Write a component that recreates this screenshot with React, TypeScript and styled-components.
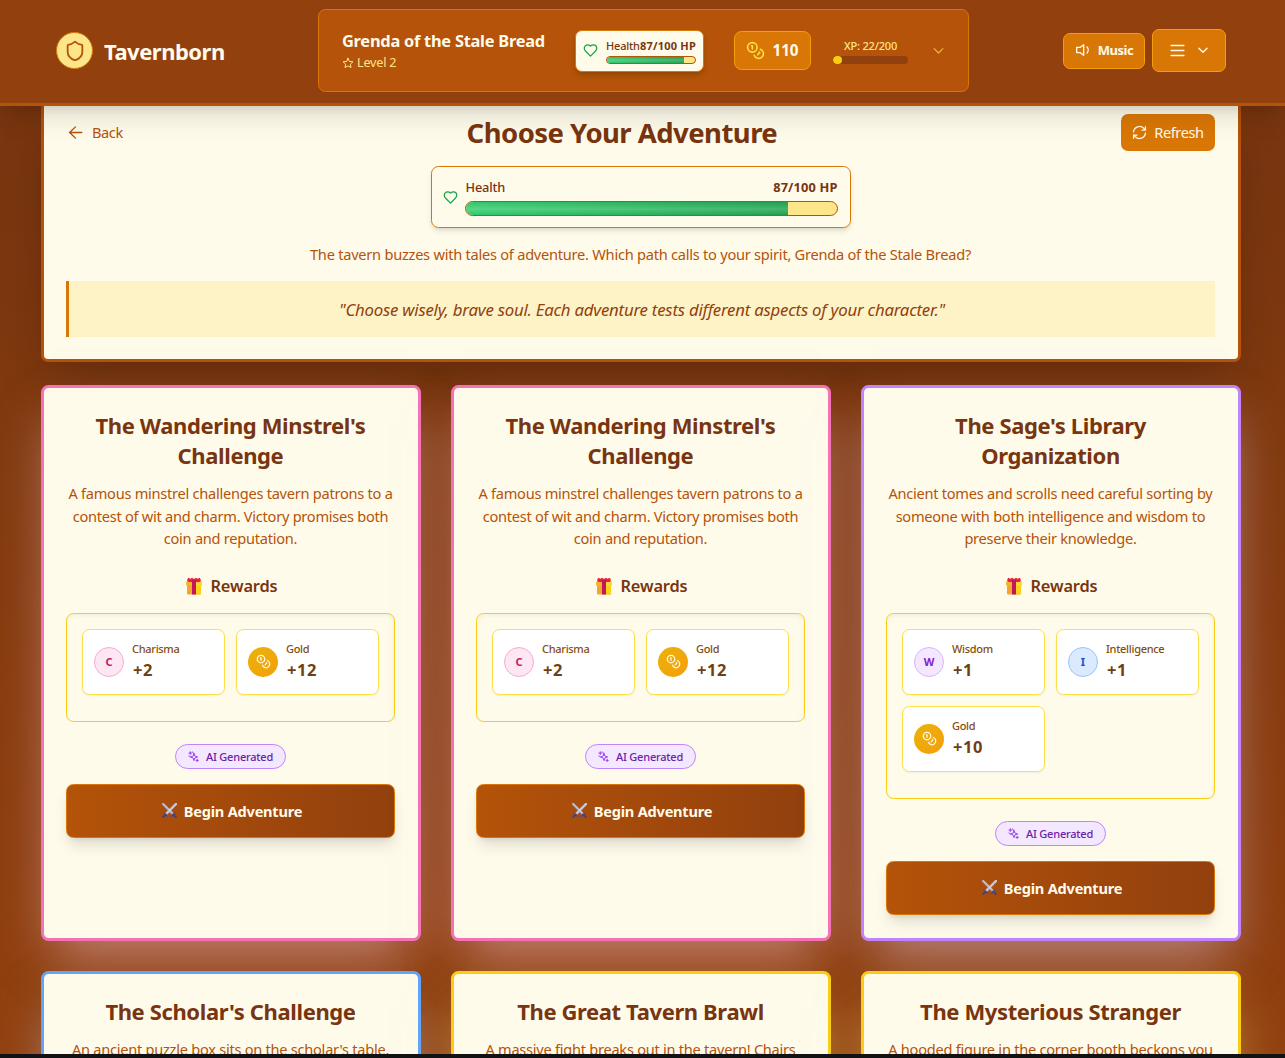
import React from "react";
import styled, { createGlobalStyle } from "styled-components";

const GlobalStyle = createGlobalStyle`
  * {
    box-sizing: border-box;
  }
  html {
    overflow: hidden;
  }
  body {
    margin: 0;
    background-color: #111214;
    font-family: "Noto Sans", "Open Sans", sans-serif;
    font-size: 15px;
  }
  h1, h2, h3, h4, p {
    margin: 0;
  }
  button {
    font-family: inherit;
    cursor: pointer;
  }
`;

interface ISvg {
  size: number;
  color?: string;
  weight?: number;
}

interface ITone {
  tone: string;
  glow: string;
}

interface IBadge {
  bg: string;
  line: string;
  color: string;
}

const Page = styled.div`
  height: 1054px;
  overflow: hidden;
  background: linear-gradient(to bottom, #78350f 0, #78350f 100px, #92400e 100%);
`;

const Header = styled.header`
  position: relative;
  z-index: 2;
  height: 106px;
  padding: 9px 59px 0 56px;
  display: flex;
  align-items: flex-start;
  justify-content: space-between;
  background-color: #92400e;
  border-bottom: 3px solid #b45309;
  box-shadow: 0 18px 24px -5px rgba(0, 0, 0, 0.1), 0 8px 10px -6px rgba(0, 0, 0, 0.12);
`;

const Brand = styled.div`
  width: 168px;
  height: 83px;
  display: flex;
  align-items: center;
  gap: 11px;
`;

const BrandMark = styled.div`
  width: 37px;
  height: 37px;
  flex-shrink: 0;
  display: flex;
  align-items: center;
  justify-content: center;
  border: 1px solid #d97706;
  border-radius: 50%;
  background-color: #fde68a;
`;

const BrandName = styled.span`
  color: #fffbeb;
  font-size: 22px;
  font-weight: 700;
  letter-spacing: -0.5px;
  white-space: nowrap;
`;

const Character = styled.div`
  width: 651px;
  height: 83px;
  padding: 0 22px 0 23px;
  display: flex;
  align-items: center;
  border: 1px solid #d97706;
  border-radius: 7.5px;
  background-color: #b45309;
`;

const CharacterInfo = styled.div`
  width: 233px;
  padding-top: 3px;
`;

const CharacterName = styled.h3`
  color: #fffbeb;
  font-size: 16.4px;
  line-height: 22px;
  font-weight: 700;
  letter-spacing: -0.25px;
  white-space: nowrap;
`;

const CharacterLevel = styled.div`
  display: flex;
  align-items: center;
  gap: 3px;
  color: #fde68a;
  font-size: 12.6px;
  line-height: 22px;
  letter-spacing: -0.2px;
`;

const MiniHealth = styled.div`
  width: 129px;
  height: 42px;
  padding: 0 7px;
  display: flex;
  align-items: center;
  gap: 8px;
  border: 1px solid #d97706;
  border-radius: 7px;
  background-color: #fffbeb;
  box-shadow: 0 4px 6px -1px rgba(0, 0, 0, 0.15), 0 2px 4px -2px rgba(0, 0, 0, 0.15);
`;

const MiniBody = styled.div`
  width: 90px;
`;

const MiniText = styled.div`
  display: flex;
  justify-content: space-between;
  color: #78350f;
  font-size: 11px;
  line-height: 15px;
  font-weight: 500;
  letter-spacing: -0.2px;
  white-space: nowrap;

  b {
    letter-spacing: 0.2px;
  }
`;

const Track = styled.div<{ thick: number }>`
  height: ${(props) => props.thick}px;
  margin-top: 3px;
  overflow: hidden;
  border: 1px solid #b45309;
  border-radius: 8px;
  background-color: #fde68a;
`;

const Fill = styled.div`
  height: 100%;
  background: linear-gradient(to bottom, rgba(0, 0, 0, 0.04), rgba(255, 255, 255, 0.16) 55%, rgba(0, 0, 0, 0.04)),
    linear-gradient(to right, #34ce70, #22a652);
`;

const GoldBox = styled.div`
  width: 77px;
  height: 39px;
  margin: 0 22px 0 30px;
  padding-bottom: 1px;
  display: flex;
  align-items: center;
  justify-content: center;
  gap: 7px;
  border: 1px solid #f59e0b;
  border-radius: 7.5px;
  background-color: #d97706;
  color: #fffbeb;
  font-size: 15.2px;
  font-weight: 700;
`;

const Xp = styled.div`
  width: 75px;
  margin-right: 23px;
  color: #fde68a;
  font-size: 11px;
  line-height: 15px;
  font-weight: 500;
  letter-spacing: -0.2px;
  text-align: center;
`;

const XpTrack = styled.div`
  height: 8px;
  margin-top: 3px;
  overflow: hidden;
  border-radius: 4px;
  background-color: #92400e;
`;

const XpFill = styled.div`
  height: 100%;
  border-radius: 4px;
  background-color: #facc15;
`;

const Tools = styled.div`
  height: 83px;
  display: flex;
  align-items: center;
  gap: 7px;
`;

const MusicBtn = styled.button`
  width: 82px;
  height: 36px;
  padding: 0 0 1px;
  display: flex;
  align-items: center;
  justify-content: center;
  gap: 7px;
  border: 1px solid #f59e0b;
  border-radius: 7px;
  background-color: #d97706;
  color: #fffbeb;
  font-size: 13px;
  font-weight: 700;
  letter-spacing: -0.5px;
`;

const MenuBtn = styled(MusicBtn)`
  width: 74px;
  height: 43px;
  gap: 10px;
`;

const Content = styled.main`
  margin: 0 44px 0 41px;
`;

const Panel = styled.section`
  height: 256px;
  padding: 8px 23px 0 22px;
  border: 3px solid #b45309;
  border-top: none;
  border-radius: 0 0 7px 7px;
  background-color: #fffbeb;
  box-shadow: 0 25px 50px -12px rgba(0, 0, 0, 0.25);
`;

const TitleRow = styled.div`
  height: 37px;
  display: flex;
  align-items: center;
  justify-content: space-between;
`;

const BackBtn = styled.button`
  padding: 0 0 1px 2px;
  display: flex;
  align-items: center;
  gap: 9px;
  border: none;
  background: none;
  color: #b45309;
  font-size: 14.6px;
  letter-spacing: -0.4px;
`;

const PageTitle = styled.h1`
  color: #78350f;
  font-size: 27.5px;
  line-height: 34px;
  font-weight: 700;
  letter-spacing: -0.54px;
`;

const RefreshBtn = styled.button`
  width: 94px;
  height: 37px;
  padding: 0 0 1px;
  display: flex;
  align-items: center;
  justify-content: center;
  gap: 7px;
  border: none;
  border-radius: 7px;
  background-color: #d97706;
  color: #fffbeb;
  font-size: 14.6px;
  letter-spacing: -0.4px;
`;

const HealthBox = styled.div`
  width: 420px;
  height: 62px;
  margin: 15px auto 0;
  padding: 1px 12px 0 11px;
  display: flex;
  align-items: center;
  gap: 7px;
  border: 1px solid #d97706;
  border-radius: 7.5px;
  box-shadow: 0 4px 6px -1px rgba(0, 0, 0, 0.1), 0 2px 4px -2px rgba(0, 0, 0, 0.1);
`;

const HealthBody = styled.div`
  flex: 1;
`;

const HealthText = styled.div`
  margin-bottom: 6px;
  padding-left: 1px;
  display: flex;
  justify-content: space-between;
  color: #78350f;
  font-size: 12.8px;
  line-height: 15px;
  font-weight: 500;
  letter-spacing: -0.15px;

  b {
    letter-spacing: 0.15px;
  }

  & + ${Track} {
    margin-top: 0;
  }
`;

const Intro = styled.p`
  margin-top: 15px;
  color: #b45309;
  font-size: 14.6px;
  line-height: 23px;
  text-align: center;
  letter-spacing: -0.245px;
`;

const Quote = styled.p`
  height: 56px;
  margin-top: 15px;
  border-left: 3px solid #d97706;
  background-color: #fef3c7;
  color: #92400e;
  font-size: 16.8px;
  line-height: 57px;
  font-style: italic;
  text-align: center;
  letter-spacing: -0.22px;
`;

const Grid = styled.div`
  margin-top: 23px;
  display: grid;
  grid-template-columns: repeat(3, 1fr);
  grid-auto-rows: 556px;
  gap: 30px;
`;

const Card = styled.article<ITone>`
  padding: 22px 23px 0 22px;
  display: flex;
  flex-direction: column;
  align-items: center;
  border: 3px solid ${(props) => props.tone};
  border-radius: 7.5px;
  background-color: #fffbeb;
  box-shadow: 0 25px 50px -12px ${(props) => props.glow};
`;

const CardTitle = styled.h3`
  color: #78350f;
  font-size: 22px;
  line-height: 30px;
  font-weight: 700;
  text-align: center;
  letter-spacing: -0.38px;
  white-space: pre;
`;

const CardText = styled.p`
  margin-top: 12px;
  color: #b45309;
  font-size: 14.6px;
  line-height: 22.5px;
  text-align: center;
  letter-spacing: -0.26px;
  white-space: pre;
`;

const RewardsTitle = styled.h4`
  height: 26px;
  margin: 23px 0 14px;
  padding-left: 3px;
  display: flex;
  align-items: center;
  gap: 8px;
  color: #78350f;
  font-size: 16.4px;
  font-weight: 600;
  letter-spacing: -0.15px;
`;

const RewardsBox = styled.div`
  width: 100%;
  padding: 15px 15px 26px;
  display: grid;
  grid-template-columns: 1fr 1fr;
  gap: 11px;
  border: 1px solid #facc15;
  border-radius: 7.5px;
  box-shadow: inset 0 2px 4px rgba(0, 0, 0, 0.05);
`;

const Reward = styled.div`
  height: 66px;
  padding-left: 11px;
  display: flex;
  align-items: center;
  gap: 8px;
  border: 1px solid #fde047;
  border-radius: 7.5px;
  background-color: #ffffff;
  box-shadow: 0 1px 2px rgba(0, 0, 0, 0.05);
`;

const StatBadge = styled.div<IBadge>`
  width: 30px;
  height: 30px;
  display: flex;
  align-items: center;
  justify-content: center;
  border: 1px solid ${(props) => props.line};
  border-radius: 50%;
  background: ${(props) => props.bg};
  background-origin: border-box;
  color: ${(props) => props.color};
  font-size: 11px;
  font-weight: 700;
`;

const RewardName = styled.div`
  color: #854d0e;
  font-size: 11px;
  line-height: 15px;
  font-weight: 500;
  letter-spacing: -0.3px;
`;

const RewardValue = styled.div`
  padding: 1px 0 0 1px;
  color: #713f12;
  font-size: 16.5px;
  line-height: 26px;
  font-weight: 700;
  letter-spacing: 0.5px;
`;

const AiTag = styled.div`
  width: 111px;
  height: 25px;
  margin: 22px 0 15px;
  display: flex;
  flex-shrink: 0;
  align-items: center;
  justify-content: center;
  gap: 7px;
  border: 1px solid #c084fc;
  border-radius: 13px;
  background-color: #f3e8ff;
  color: #6b21a8;
  font-size: 11px;
  font-weight: 500;
  letter-spacing: -0.2px;
`;

const BeginBtn = styled.button`
  width: 100%;
  height: 54px;
  padding: 0 0 0 3px;
  display: flex;
  flex-shrink: 0;
  align-items: center;
  justify-content: center;
  gap: 7px;
  border: 1px solid #d97706;
  border-radius: 7.5px;
  background: linear-gradient(to right, #b45309, #92400e);
  color: #fffbeb;
  font-size: 14.6px;
  font-weight: 700;
  letter-spacing: -0.23px;
  box-shadow: 0 10px 15px -3px rgba(0, 0, 0, 0.12), 0 4px 6px -4px rgba(0, 0, 0, 0.12);
`;

const Stroke: React.FunctionComponent<ISvg & { children: React.ReactNode }> = ({ size, color = "currentColor", weight = 2, children }) => (
  <svg width={size} height={size} viewBox="0 0 24 24" fill="none" stroke={color} strokeWidth={weight} strokeLinecap="round" strokeLinejoin="round">
    {children}
  </svg>
);

const ShieldIcon = (props: ISvg) => (
  <Stroke {...props}>
    <path d="M20 13c0 5-3.500 7.500-7.660 8.950a1 1 0 0 1-.67-.01C7.500 20.500 4 18 4 13V6a1 1 0 0 1 1-1c2 0 4.500-1.200 6.240-2.720a1.170 1.170 0 0 1 1.520 0C14.510 3.810 17 5 19 5a1 1 0 0 1 1 1z" />
  </Stroke>
);

const StarIcon = (props: ISvg) => (
  <Stroke {...props}>
    <path d="M12 2.500l2.900 6.300 6.900.8-5.100 4.700 1.400 6.800-6.100-3.400-6.100 3.400 1.400-6.800-5.100-4.700 6.900-.8z" />
  </Stroke>
);

const HeartIcon = (props: ISvg) => (
  <Stroke {...props}>
    <path d="M19 14c1.490-1.460 3-3.210 3-5.500A5.500 5.500 0 0 0 16.500 3c-1.760 0-3 .5-4.500 2-1.500-1.500-2.740-2-4.500-2A5.500 5.500 0 0 0 2 8.500c0 2.300 1.500 4.050 3 5.500l7 7Z" />
  </Stroke>
);

const CoinsIcon = (props: ISvg) => (
  <Stroke {...props}>
    <circle cx="8" cy="8" r="6" />
    <path d="M18.090 10.370A6 6 0 1 1 10.340 18" />
    <path d="M7 6h1v4" />
    <path d="m16.710 13.880.7.710-2.820 2.820" />
  </Stroke>
);

const ChevronIcon = (props: ISvg) => (
  <Stroke {...props}>
    <path d="m5 9 7 7 7-7" />
  </Stroke>
);

const VolumeIcon = (props: ISvg) => (
  <Stroke {...props}>
    <path d="M13 4 8 8H2.500v8H8l5 4z" />
    <path d="M18 7.500a6.500 6.500 0 0 1 0 9" />
  </Stroke>
);

const MenuIcon = (props: ISvg) => (
  <Stroke {...props}>
    <path d="M3 5h18M3 12h18M3 19h18" />
  </Stroke>
);

const BackIcon = (props: ISvg) => (
  <Stroke {...props}>
    <path d="M22 12H2.500M12 3l-9.500 9 9.500 9" />
  </Stroke>
);

const RefreshIcon = (props: ISvg) => (
  <Stroke {...props}>
    <path d="M2.500 11A9.500 9.500 0 0 1 19 5.500l2.500 2.500M21.500 2.500V8H16M21.500 13A9.500 9.500 0 0 1 5 18.500L2.500 16M2.500 21.500V16H8" />
  </Stroke>
);

const SparklesIcon = (props: ISvg) => (
  <Stroke {...props}>
    <path d="M13 5l2 6 6 2-6 2-2 6-2-6-6-2 6-2z" />
    <path d="M5 1.500v6M2 4.500h6M20 18v5M17.500 20.500h5M10 2l1 2M2 11l2 1" />
  </Stroke>
);

const GiftIcon = () => (
  <svg width="16" height="18" viewBox="0 0 16 18">
    <rect x="1" y="7" width="14" height="10.500" rx="1" fill="#f3a62f" />
    <rect x="10" y="7" width="5" height="10.500" rx="1" fill="#fcd116" />
    <rect x="0" y="4.500" width="16" height="4" rx="0.800" fill="#f7b32e" />
    <rect x="10" y="4.500" width="6" height="4" rx="0.800" fill="#fdd835" />
    <path d="M1 4 2 .8l2.500 1L6 .8l2 1.200L10 .8l1.500 1 2.500-1L15 4l-1.500 1h-11z" fill="#e5243b" />
    <rect x="6" y="3" width="4" height="14.500" fill="#c2185b" />
  </svg>
);

const SwordsIcon = () => (
  <svg width="15" height="15" viewBox="0 0 16 16" fill="none" strokeLinecap="round">
    <path d="M1 1 11.500 11.500" stroke="#a9a3b8" strokeWidth="2.600" />
    <path d="M15 1 4.500 11.500" stroke="#c9c4d6" strokeWidth="2.600" />
    <path d="M1.500 1 11 10.500" stroke="#e9e5f0" strokeWidth="0.900" />
    <path d="M2 11 6 14M14 11 10 14" stroke="#5c4a86" strokeWidth="2" />
    <path d="M4 12.500 1.300 15M12 12.500l2.700 2.500" stroke="#494369" strokeWidth="2" />
  </svg>
);

const badges: Record<string, IBadge> = {
  Charisma: { bg: "#fce7f3", line: "#f9a8d4", color: "#be185d" },
  Wisdom: { bg: "#f3e8ff", line: "#d8b4fe", color: "#7e22ce" },
  Intelligence: { bg: "#dbeafe", line: "#93c5fd", color: "#1d4ed8" },
  Gold: { bg: "linear-gradient(135deg, #eab308, #f59e0b)", line: "transparent", color: "#fffbeb" },
};

interface IAdventure {
  title: string;
  text: string;
  tone: string;
  glow: string;
  rewards: [string, string][];
}

const minstrel: IAdventure = {
  title: "The Wandering Minstrel's\nChallenge",
  text: "A famous minstrel challenges tavern patrons to a\ncontest of wit and charm. Victory promises both\ncoin and reputation.",
  tone: "#f472b6",
  glow: "rgba(251, 207, 232, 0.5)",
  rewards: [["Charisma", "+2"], ["Gold", "+12"]],
};

const adventures: IAdventure[] = [
  minstrel,
  minstrel,
  {
    title: "The Sage's Library\nOrganization",
    text: "Ancient tomes and scrolls need careful sorting by\nsomeone with both intelligence and wisdom to\npreserve their knowledge.",
    tone: "#c084fc",
    glow: "rgba(233, 213, 255, 0.5)",
    rewards: [["Wisdom", "+1"], ["Intelligence", "+1"], ["Gold", "+10"]],
  },
  {
    title: "The Scholar's Challenge",
    text: "An ancient puzzle box sits on the scholar's table.",
    tone: "#60a5fa",
    glow: "rgba(191, 219, 254, 0.5)",
    rewards: [],
  },
  {
    title: "The Great Tavern Brawl",
    text: "A massive fight breaks out in the tavern! Chairs",
    tone: "#facc15",
    glow: "rgba(254, 240, 138, 0.5)",
    rewards: [],
  },
  {
    title: "The Mysterious Stranger",
    text: "A hooded figure in the corner booth beckons you",
    tone: "#facc15",
    glow: "rgba(254, 240, 138, 0.5)",
    rewards: [],
  },
];

const AdventureCard: React.FunctionComponent<IAdventure> = ({ title, text, tone, glow, rewards }) => (
  <Card tone={tone} glow={glow}>
    <CardTitle>{title}</CardTitle>
    <CardText>{text}</CardText>
    {rewards.length > 0 && (
      <>
        <RewardsTitle>
          <GiftIcon />
          Rewards
        </RewardsTitle>
        <RewardsBox>
          {rewards.map(([name, value]) => (
            <Reward key={name}>
              <StatBadge {...badges[name]}>{name === "Gold" ? <CoinsIcon size={15} /> : name[0]}</StatBadge>
              <div>
                <RewardName>{name}</RewardName>
                <RewardValue>{value}</RewardValue>
              </div>
            </Reward>
          ))}
        </RewardsBox>
        <AiTag>
          <SparklesIcon size={11} color="#9333ea" />
          AI Generated
        </AiTag>
        <BeginBtn>
          <SwordsIcon />
          Begin Adventure
        </BeginBtn>
      </>
    )}
  </Card>
);

const App: React.FunctionComponent = () => {
  const hp = 87;
  const xp = 22;

  return (
    <Page>
      <GlobalStyle />
      <Header>
        <Brand>
          <BrandMark>
            <ShieldIcon size={22} color="#b45309" weight={2} />
          </BrandMark>
          <BrandName>Tavernborn</BrandName>
        </Brand>

        <Character>
          <CharacterInfo>
            <CharacterName>Grenda of the Stale Bread</CharacterName>
            <CharacterLevel>
              <StarIcon size={12} />
              Level 2
            </CharacterLevel>
          </CharacterInfo>
          <MiniHealth>
            <HeartIcon size={15} color="#16a34a" />
            <MiniBody>
              <MiniText>
                <span>Health</span>
                <b>{hp}/100 HP</b>
              </MiniText>
              <Track thick={8}>
                <Fill style={{ width: `${hp}%` }} />
              </Track>
            </MiniBody>
          </MiniHealth>
          <GoldBox>
            <CoinsIcon size={19} color="#fde047" />
            110
          </GoldBox>
          <Xp>
            XP: {xp}/200
            <XpTrack>
              <XpFill style={{ width: `${(xp / 200) * 100 + 1}%` }} />
            </XpTrack>
          </Xp>
          <ChevronIcon size={15} color="#f0b040" />
        </Character>

        <Tools>
          <MusicBtn>
            <VolumeIcon size={16} />
            Music
          </MusicBtn>
          <MenuBtn>
            <MenuIcon size={17} />
            <ChevronIcon size={14} weight={2.4} />
          </MenuBtn>
        </Tools>
      </Header>

      <Content>
        <Panel>
          <TitleRow>
            <BackBtn>
              <BackIcon size={15} weight={2.2} />
              Back
            </BackBtn>
            <PageTitle>Choose Your Adventure</PageTitle>
            <RefreshBtn>
              <RefreshIcon size={15} />
              Refresh
            </RefreshBtn>
          </TitleRow>
          <HealthBox>
            <HeartIcon size={15} color="#16a34a" />
            <HealthBody>
              <HealthText>
                <span>Health</span>
                <b>{hp}/100 HP</b>
              </HealthText>
              <Track thick={15}>
                <Fill style={{ width: `${hp}%` }} />
              </Track>
            </HealthBody>
          </HealthBox>
          <Intro>The tavern buzzes with tales of adventure. Which path calls to your spirit, Grenda of the Stale Bread?</Intro>
          <Quote>"Choose wisely, brave soul. Each adventure tests different aspects of your character."</Quote>
        </Panel>

        <Grid>
          {adventures.map((adventure, index) => (
            <AdventureCard key={index} {...adventure} />
          ))}
        </Grid>
      </Content>
    </Page>
  );
};

export default App;
